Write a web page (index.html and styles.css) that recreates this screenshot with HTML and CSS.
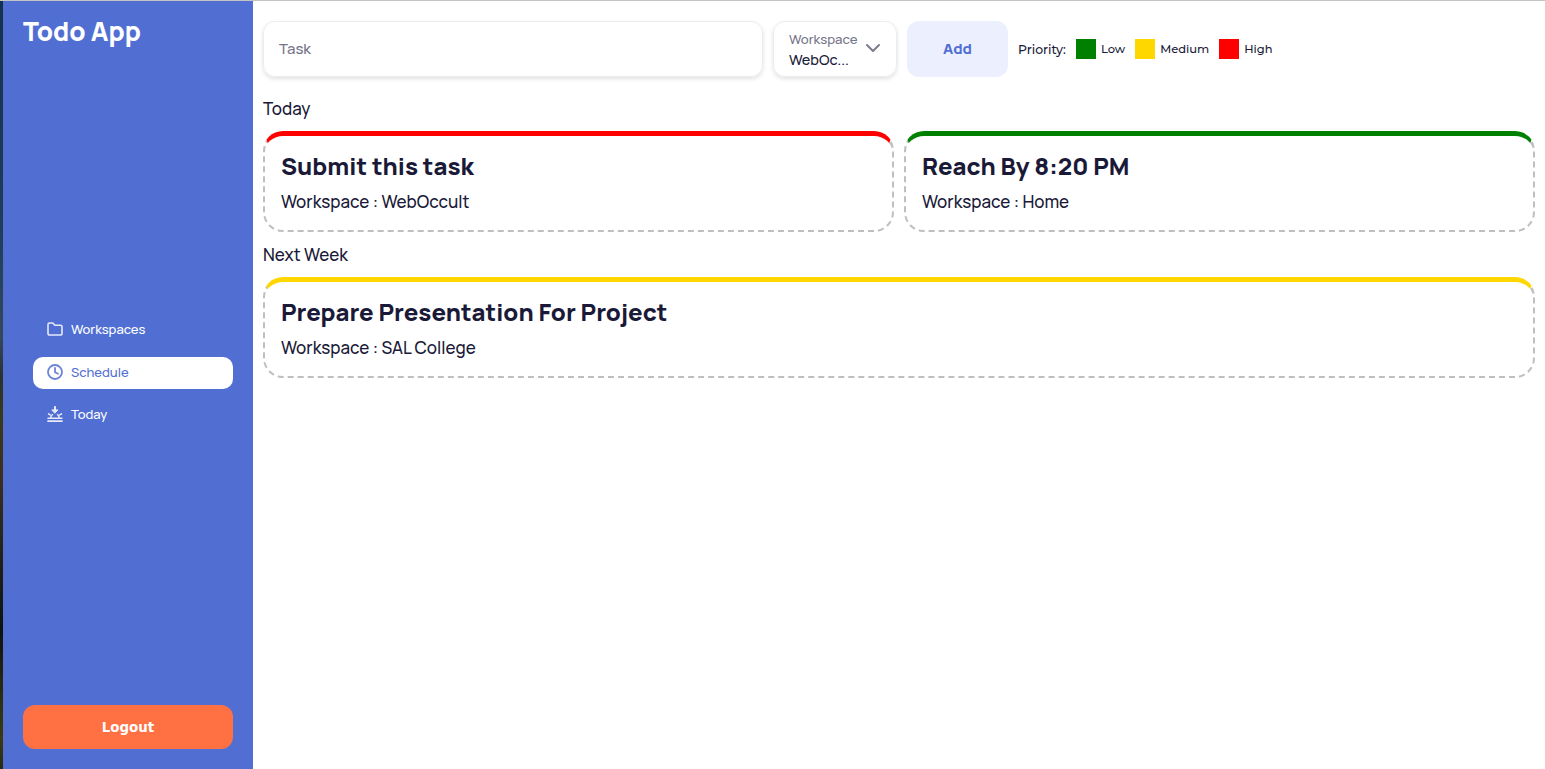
FILE: index.html
```html
<!DOCTYPE html>
<html lang="en">
<head>
<meta charset="utf-8">
<title>Todo App</title>
<link rel="stylesheet" href="styles.css">
</head>
<body>
<div class="topline"></div>
<div class="window">
  <div class="edge"></div>
  <aside class="sidebar">
    <h1 class="brand">Todo App</h1>
    <nav class="nav">
      <a class="nav-item">
        <svg class="nav-icon" viewBox="0 0 16 16" fill="none" stroke="currentColor" stroke-width="1.600" stroke-linejoin="round" stroke-linecap="round"><path d="M1 3.500A1.500 1.500 0 0 1 2.500 2h3.300l2 2.200h5.700A1.500 1.500 0 0 1 15 5.700v6.800a1.500 1.500 0 0 1-1.500 1.500h-11A1.500 1.500 0 0 1 1 12.500z"/></svg>
        <span>Workspaces</span>
      </a>
      <a class="nav-item active">
        <svg class="nav-icon" viewBox="0 0 16 16" fill="none" stroke="currentColor" stroke-width="1.800" stroke-linecap="round" stroke-linejoin="round"><circle cx="8" cy="8" r="7"/><path d="M8 4v4.300l3 1.400"/></svg>
        <span>Schedule</span>
      </a>
      <a class="nav-item">
        <svg class="nav-icon" viewBox="0 0 16 16" fill="none" stroke="currentColor" stroke-width="1.700" stroke-linecap="round" stroke-linejoin="round"><path d="M8 .9v3.600" stroke-width="2"/><path d="M5.200 3.900h5.600L8 7z" fill="currentColor" stroke-width="1"/><path d="M3.800 11.800a4.300 4.300 0 0 1 1.700-3.300M12.200 11.800a4.300 4.300 0 0 0-1.700-3.300M1.500 7.800l1.700 1.100M14.500 7.800l-1.700 1.100M1 12.300h14" stroke-width="1.500"/><path d="M1 15.100h14" stroke-width="1.800"/></svg>
        <span>Today</span>
      </a>
    </nav>
    <button class="logout" type="button">Logout</button>
  </aside>
  <main class="content">
    <form class="toolbar">
      <div class="task-input">Task</div>
      <div class="select">
        <div class="select-text">
          <span class="select-label">Workspace</span>
          <span class="select-value">WebOc...</span>
        </div>
        <svg class="chevron" viewBox="0 0 16 10" fill="none" stroke="currentColor" stroke-width="2" stroke-linecap="round" stroke-linejoin="round"><path d="M2 2l6 6 6-6"/></svg>
      </div>
      <button class="add" type="button">Add</button>
      <div class="legend">
        <span class="legend-title">Priority:</span>
        <i class="swatch low"></i><span class="legend-name">Low</span>
        <i class="swatch medium"></i><span class="legend-name">Medium</span>
        <i class="swatch high"></i><span class="legend-name">High</span>
      </div>
    </form>
    <h2 class="section-title">Today</h2>
    <section class="cards">
      <article class="card high-card">
        <h3 class="card-title">Submit this task</h3>
        <p class="card-sub">Workspace : WebOccult</p>
      </article>
      <article class="card low-card">
        <h3 class="card-title">Reach By 8:20 PM</h3>
        <p class="card-sub">Workspace : Home</p>
      </article>
    </section>
    <h2 class="section-title">Next Week</h2>
    <section class="cards single">
      <article class="card medium-card">
        <h3 class="card-title">Prepare Presentation For Project</h3>
        <p class="card-sub">Workspace : SAL College</p>
      </article>
    </section>
  </main>
</div>
</body>
</html>
```
FILE: styles.css
```css
* { box-sizing: border-box; }
html, body { margin: 0; height: 100%; overflow: hidden; }
body {
  font-family: Manrope, Inter, "Noto Sans", sans-serif;
  background: #fff;
  color: #1a1a38;
  display: flex;
  flex-direction: column;
}
.topline { height: 1px; background: #c4c4c4; flex: none; }
.window { flex: 1; display: flex; min-height: 0; }
.edge {
  width: 3px;
  flex: none;
  background: linear-gradient(180deg, #14324f 0%, #1d3d5a 28%, #33485c 44%, #2b3030 49%, #3a3a18 54%, #3c2e20 62%, #22241a 72%, #101210 82%, #2a2c10 90%, #3c3a12 96%, #2a2a12 100%);
}
.sidebar {
  width: 250px;
  flex: none;
  background: #516fd3;
  display: flex;
  flex-direction: column;
  padding: 14px 20px 20px;
  color: #fff;
}
.brand {
  margin: 0;
  font-size: 26px;
  line-height: 32px;
  font-weight: 800;
}
.nav {
  flex: 1;
  display: flex;
  flex-direction: column;
  justify-content: center;
  gap: 10px;
  padding: 0 0 8px 10px;
}
.nav-item {
  display: flex;
  align-items: center;
  gap: 8px;
  height: 32px;
  padding: 0 14px 1px;
  border-radius: 10px;
  font-size: 13px;
  font-weight: 500;
  color: #fff;
}
.nav-item.active { background: #fff; color: #516fd3; margin-top: 1px; }
.nav-icon { width: 16px; height: 16px; flex: none; opacity: .85; }
.logout {
  height: 44px;
  border: 0;
  border-radius: 12px;
  background: #ff7043;
  color: #fff;
  font-family: "DejaVu Sans", sans-serif;
  font-size: 13.4px;
  font-weight: 700;
}
.content {
  flex: 1;
  min-width: 0;
  padding: 20px 10px 0;
}
.toolbar { display: flex; align-items: center; gap: 10px; height: 56px; margin-bottom: 19px; }
.task-input {
  width: 500px;
  height: 56px;
  border: 1px solid #ececec;
  border-radius: 12px;
  box-shadow: 0 2px 4px rgba(0,0,0,.12);
  padding: 0 15px 2px;
  display: flex;
  align-items: center;
  font-size: 15px;
  font-weight: 500;
  color: #757588;
}
.select {
  width: 124px;
  height: 56px;
  border: 1px solid #ececec;
  border-radius: 12px;
  box-shadow: 0 2px 4px rgba(0,0,0,.12);
  padding: 0 15px;
  display: flex;
  align-items: center;
  justify-content: space-between;
}
.select-text { display: flex; flex-direction: column; padding-top: 4px; }
.select-label { font-size: 13.2px; line-height: 17px; color: #757588; white-space: nowrap; font-weight: 500; }
.select-value { font-size: 14.4px; line-height: 23px; font-weight: 500; }
.chevron { width: 16px; height: 10px; color: #7b7b8c; flex: none; margin-top: -2px; }
.add {
  width: 101px;
  height: 56px;
  border: 0;
  border-radius: 12px;
  padding: 0 0 2px;
  background: #eceffd;
  color: #516fd3;
  font-family: Manrope, Inter, sans-serif;
  font-size: 15px;
  font-weight: 800;
}
.legend {
  display: flex;
  align-items: center;
  font-family: Montserrat, "Open Sans", sans-serif;
  font-size: 12.4px;
  font-weight: 500;
}
.legend-title { margin-right: 10px; }
.swatch { width: 20px; height: 20px; margin-right: 5px; }
.legend-name { margin-right: 10px; font-size: 11.5px; }
.low { background: #008000; }
.medium { background: #ffd700; }
.high { background: #ff0000; }
.section-title {
  margin: 10px 0 0;
  font-size: 17px;
  line-height: 25px;
  font-weight: 500;
}
.cards { display: grid; grid-template-columns: 1fr 1fr; gap: 10px; margin-top: 10px; }
.cards.single { grid-template-columns: 1fr; }
.card {
  height: 101px;
  padding: 15px 16px 0;
  border: 2px dashed #bfbfbf;
  border-top-width: 5px;
  border-top-style: solid;
  border-radius: 20px;
}
.high-card { border-top-color: #ff0000; }
.low-card { border-top-color: #008000; }
.medium-card { border-top-color: #ffd700; }
.card-title {
  margin: 0;
  font-size: 24px;
  line-height: 30px;
  font-weight: 800;
}
.card-sub {
  margin: 9px 0 0;
  font-size: 17px;
  line-height: 24px;
  font-weight: 500;
}
```
